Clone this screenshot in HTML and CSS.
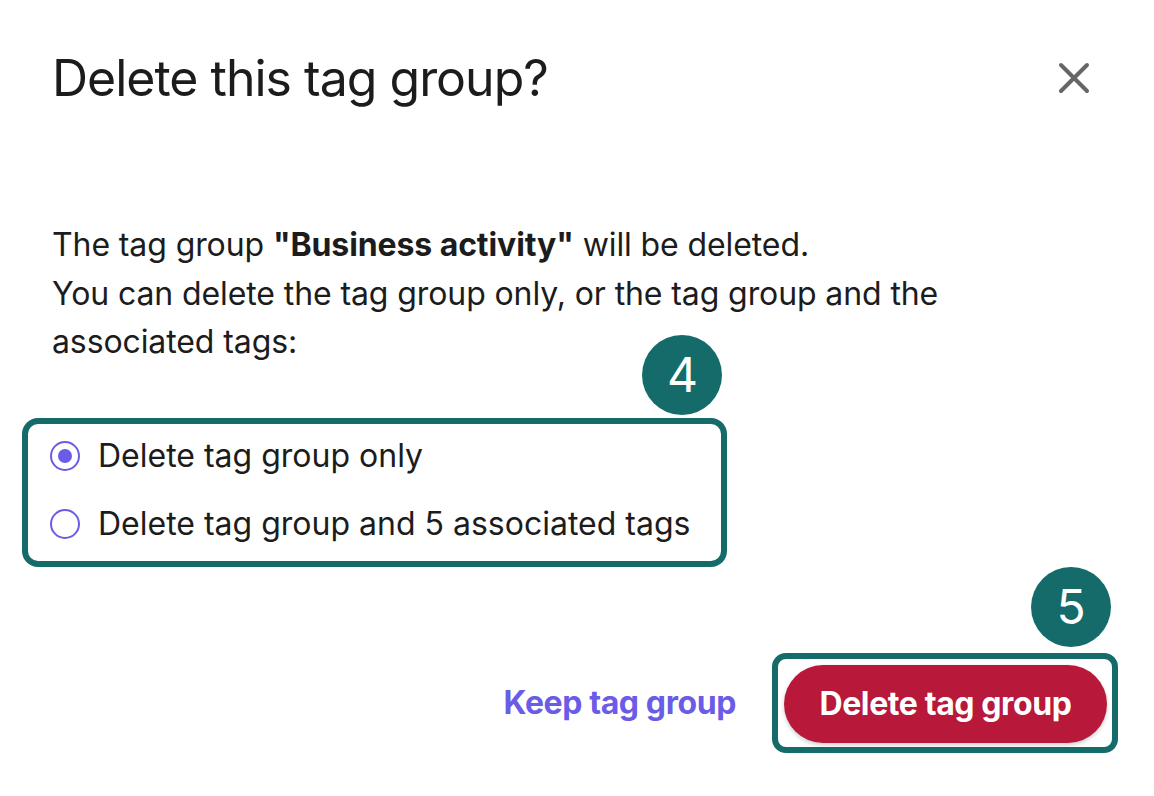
FILE: index.html
```html
<!DOCTYPE html>
<html lang="en">
<head>
    <meta charset="UTF-8">
    <meta name="viewport" content="width=device-width, initial-scale=1.0">
    <title>Delete this tag group?</title>
    <link rel="stylesheet" href="styles.css">
</head>
<body>

    <div class="dialog">
        <div class="dialog-head">
            <h1 class="dialog-title">Delete this tag group?</h1>
            <button class="close-btn" aria-label="Close">
                <svg width="32" height="32" viewBox="0 0 32 32">
                    <path d="M3 3 L29 29 M29 3 L3 29" stroke="#666" stroke-width="4" stroke-linecap="round" fill="none"/>
                </svg>
            </button>
        </div>

        <p class="dialog-text">
            The tag group <b>"Business activity"</b> will be deleted.<br>
            You can delete the tag group only, or the tag group and the associated tags:
        </p>

        <div class="mark-box options">
            <span class="step">4</span>
            <label class="option">
                <input type="radio" name="mode" checked>
                <span class="dot"></span>
                Delete tag group only
            </label>
            <label class="option">
                <input type="radio" name="mode">
                <span class="dot"></span>
                Delete tag group and 5 associated tags
            </label>
        </div>

        <div class="dialog-foot">
            <a href="#" class="keep-link">Keep tag group</a>
            <div class="mark-box confirm">
                <span class="step">5</span>
                <button class="delete-btn">Delete tag group</button>
            </div>
        </div>
    </div>

</body>
</html>
```

FILE: styles.css
```css
body {
    margin: 0;
    background: #fff;
    font-family: Inter, "Noto Sans", sans-serif;
    color: #1c1c1c;
}
.dialog {
    padding: 0 36px 0 52px;
}
.dialog-head {
    display: flex;
    justify-content: space-between;
    align-items: center;
    padding-top: 46px;
    padding-right: 28px;
}
.dialog-title {
    margin: 0;
    font-size: 50px;
    font-weight: 400;
    letter-spacing: -1px;
    line-height: 64px;
}
.close-btn {
    border: 0;
    background: none;
    padding: 0;
    width: 32px;
    height: 32px;
    cursor: pointer;
}
.dialog-text {
    margin: 111px 0 0;
    max-width: 900px;
    font-size: 32px;
    line-height: 48.5px;
    letter-spacing: -0.1px;
}
.dialog-text b {
    font-weight: 700;
}

/* teal frames + numbered badges */
.mark-box {
    position: relative;
    border: 6px solid #146b69;
    border-radius: 16px;
}
.step {
    position: absolute;
    width: 80px;
    height: 80px;
    border-radius: 50%;
    background: #146b69;
    color: #fff;
    font-size: 48px;
    line-height: 80px;
    text-align: center;
}
.options {
    width: fit-content;
    margin: 51px 0 0 -30px;
    padding: 15px 31px 20px 22px;
    display: flex;
    flex-direction: column;
    gap: 34px;
}
.options .step {
    right: -1px;
    top: -89px;
}
.option {
    display: flex;
    align-items: center;
    gap: 18px;
    font-size: 32px;
    line-height: 34px;
    cursor: pointer;
}
.option input {
    display: none;
}
.dot {
    width: 30px;
    height: 30px;
    box-sizing: border-box;
    border: 2px solid #6b5ce7;
    border-radius: 50%;
    display: flex;
    align-items: center;
    justify-content: center;
}
.option input:checked + .dot::after {
    content: "";
    width: 14px;
    height: 14px;
    border-radius: 50%;
    background: #6b5ce7;
}

.dialog-foot {
    display: flex;
    justify-content: flex-end;
    align-items: center;
    gap: 36px;
    margin-top: 86px;
}
.keep-link {
    color: #6b5ce7;
    font-size: 32px;
    font-weight: 700;
    text-decoration: none;
    letter-spacing: -0.4px;
}
.confirm {
    padding: 6px 5px 4px 6px;
    border-radius: 14px;
}
.confirm .step {
    right: 1px;
    top: -92px;
}
.delete-btn {
    display: block;
    width: 323px;
    height: 78px;
    border: 0;
    border-radius: 39px;
    background: #b8183a;
    color: #fff;
    font-family: inherit;
    font-size: 32px;
    font-weight: 700;
    letter-spacing: -0.4px;
    box-shadow: 0 2px 4px rgba(0, 0, 0, 0.2);
    cursor: pointer;
}
```
